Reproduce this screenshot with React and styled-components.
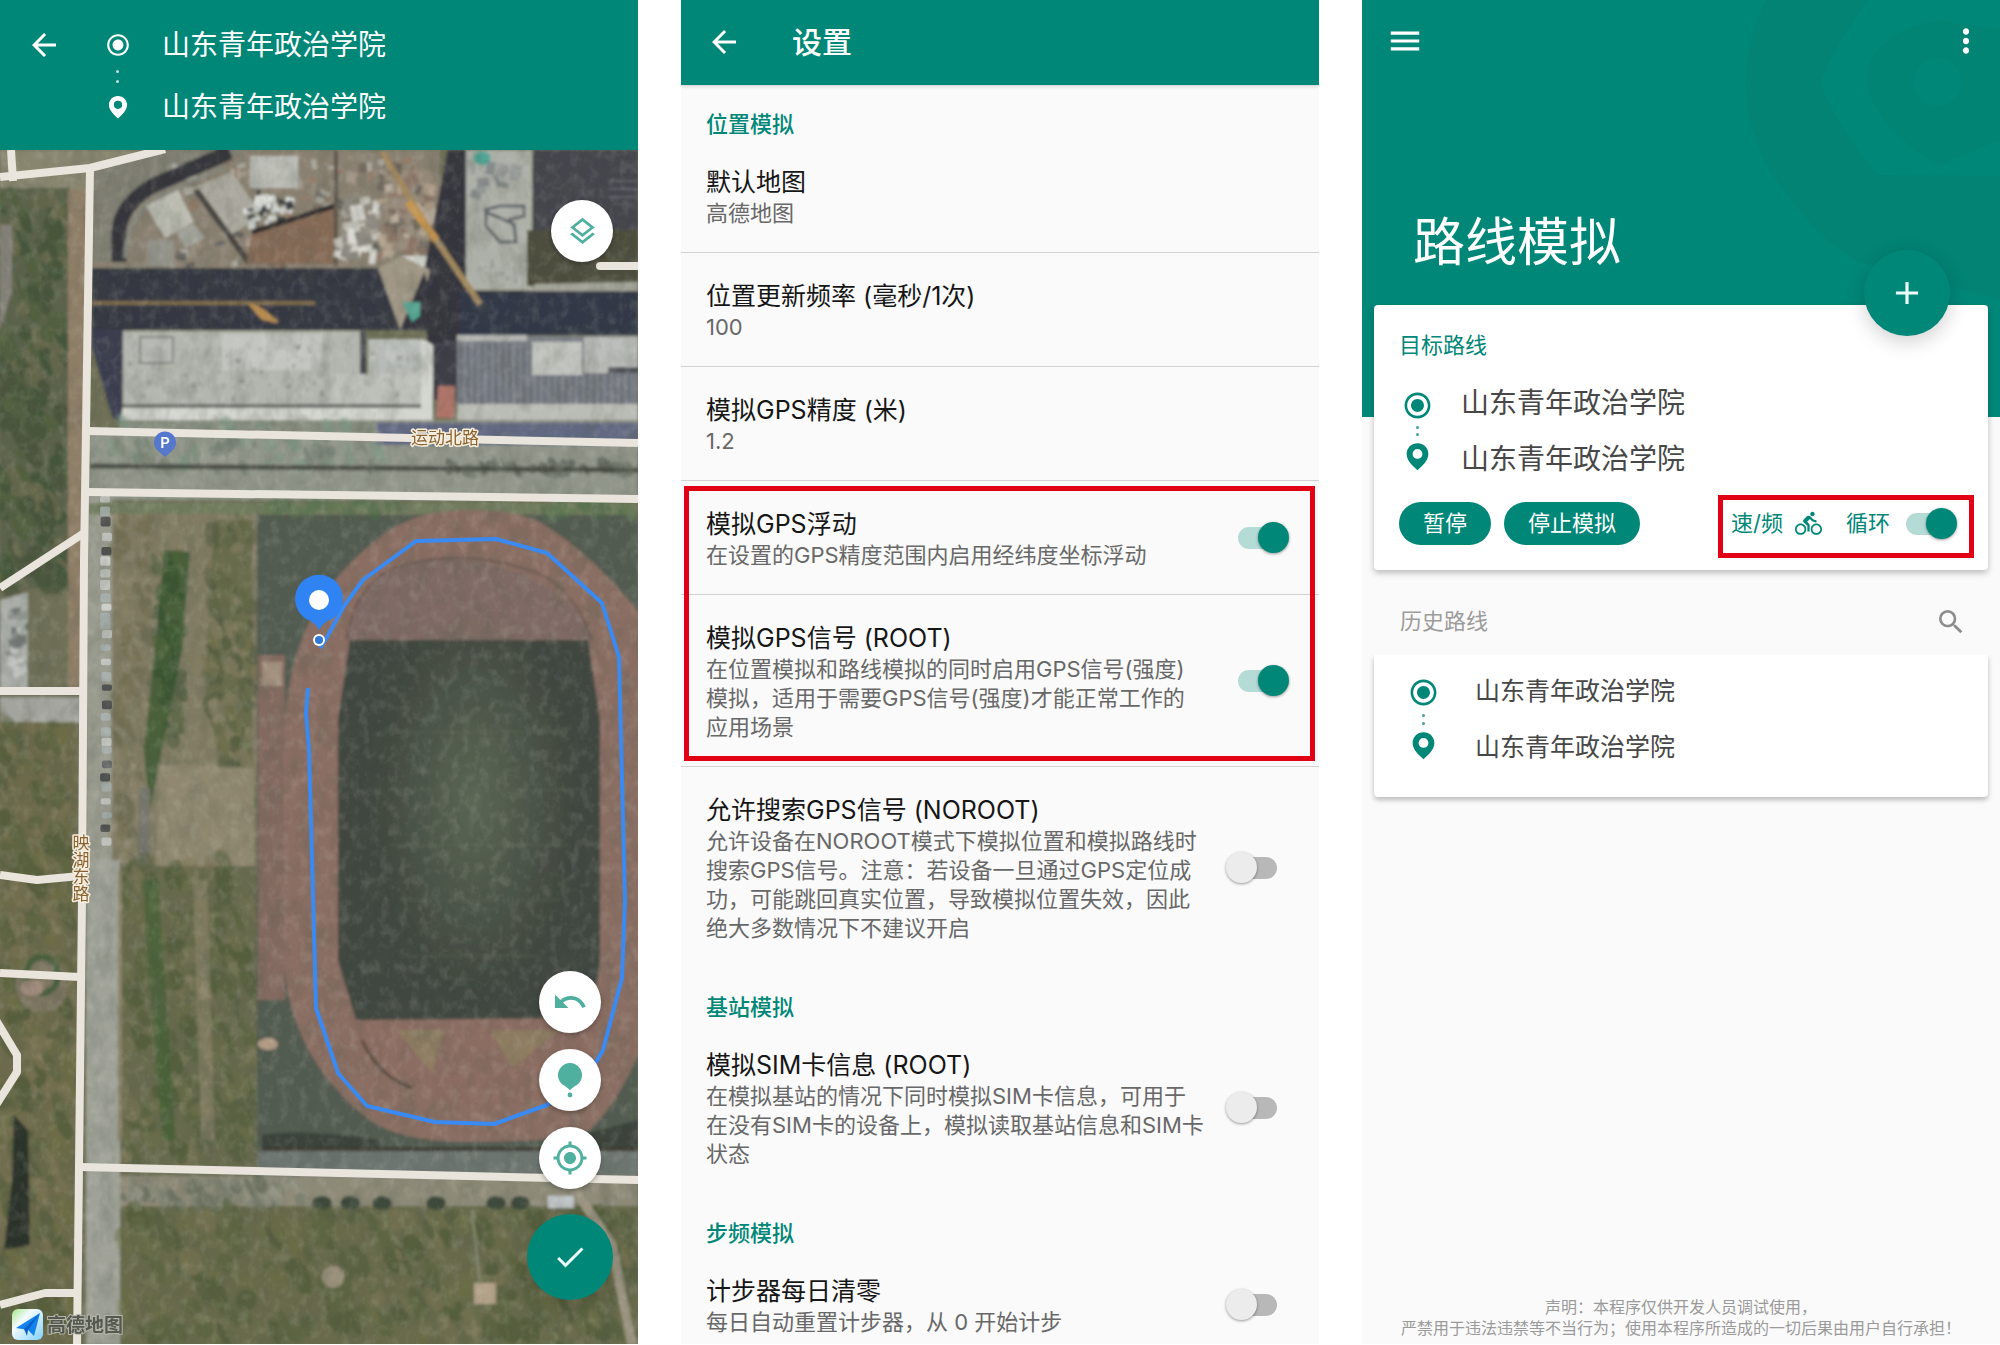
import React from "react";
import styled, { createGlobalStyle, css } from "styled-components";
import {
  MdArrowBack,
  MdRadioButtonChecked,
  MdMenu,
  MdMoreVert,
  MdSearch,
  MdAdd,
  MdCheck,
  MdDirectionsBike,
  MdMyLocation,
  MdOutlineLayers,
  MdUndo,
} from "react-icons/md";

const TEAL = "#008778";
const SOFT_TEAL = "#4fb0a0";
const SANS = 'Inter, "Noto Sans CJK SC", sans-serif';

const GlobalStyle = createGlobalStyle`
  *, *::before, *::after { box-sizing: border-box; }
  body { margin: 0; background: #fff; font-family: ${SANS}; }
  button { font: inherit; color: inherit; border: 0; padding: 0; background: none; cursor: pointer; }
  svg { display: block; flex: none; }
`;

const Page = styled.main`
  display: grid;
  grid-template-columns: repeat(3, minmax(0, 1fr));
  gap: 43px;
  height: 100vh;
  padding-bottom: 1px;
`;

const Screen = styled.section`
  display: flex;
  flex-direction: column;
  min-height: 0;
  overflow: hidden;
  background: #fafafa;
`;

const highlight = css`
  position: relative;
  &::after {
    content: "";
    position: absolute;
    inset: ${(p) => p.$inset};
    border: 5px solid #e10014;
    pointer-events: none;
  }
`;

const IconButton = styled.button`
  display: flex;
  color: ${(p) => p.$color || "#fff"};
`;

/* ---------- route (start / end) ---------- */

const RouteBox = styled.div`
  display: flex;
  align-items: center;
  gap: ${(p) => p.$gap}px;
`;

const Markers = styled.div`
  display: flex;
  flex-direction: column;
  align-items: center;
  width: 37px;
  color: ${(p) => p.$color};
`;

const Dots = styled.span`
  display: flex;
  flex-direction: column;
  justify-content: center;
  align-items: center;
  gap: ${(p) => p.$gap}px;
  height: ${(p) => p.$height}px;
  opacity: 0.75;
  &::before,
  &::after {
    content: "";
    width: 3px;
    height: 3px;
    border-radius: 50%;
    background: currentColor;
  }
`;

const Stops = styled.ul`
  display: flex;
  flex-direction: column;
  gap: ${(p) => p.$gap}px;
  margin: 0;
  padding: 0;
  list-style: none;
  font-size: ${(p) => p.$size}px;
  line-height: 40px;
  color: ${(p) => p.$color};
`;

function PinIcon({ size }) {
  return (
    <svg width={size} height={size} viewBox="0 0 24 24" fill="currentColor" aria-hidden="true">
      <path
        fillRule="evenodd"
        d="M12 1.8C7.3 1.8 3.6 5.4 3.6 10c0 5.300 4.700 9 8.400 12.600C15.700 19 20.400 15.300 20.400 10c0-4.600-3.700-8.200-8.400-8.200zM12 6.200a3.800 3.800 0 1 1 0 7.600a3.800 3.800 0 1 1 0-7.600z"
      />
    </svg>
  );
}

function Route({ iconSize, iconColor, dotsHeight, dotsGap, gap, size, color, rowGap }) {
  return (
    <RouteBox $gap={gap}>
      <Markers $color={iconColor}>
        <MdRadioButtonChecked size={iconSize} />
        <Dots $height={dotsHeight} $gap={dotsGap} />
        <PinIcon size={iconSize} />
      </Markers>
      <Stops $gap={rowGap} $size={size} $color={color}>
        <li>山东青年政治学院</li>
        <li>山东青年政治学院</li>
      </Stops>
    </RouteBox>
  );
}

/* ---------- switch ---------- */

const Switch = styled.input.attrs({ type: "checkbox", role: "switch" })`
  appearance: none;
  position: relative;
  flex: none;
  width: 63px;
  height: 31px;
  margin: 0;
  cursor: pointer;
  &::before {
    content: "";
    position: absolute;
    inset: 5px 12px 4px;
    border-radius: 11px;
    background: #b8b8b8;
  }
  &::after {
    content: "";
    position: absolute;
    top: 0;
    left: 0;
    width: 31px;
    height: 31px;
    border-radius: 50%;
    background: #ececec;
    box-shadow: 0 1px 3px rgba(0, 0, 0, 0.4);
  }
  &:checked::before {
    background: #b4dbd5;
  }
  &:checked::after {
    left: 32px;
    background: ${TEAL};
  }
`;

/* ---------- satellite map ---------- */

const RouteBar = styled.header`
  display: flex;
  align-items: flex-start;
  gap: 37px;
  padding: 25px 26px 23px;
  background: ${TEAL};
`;

const BackSlot = styled.div`
  display: flex;
  align-items: center;
  height: 40px;
`;

const MapArea = styled.div`
  position: relative;
  flex: 1;
  min-height: 0;
  overflow: hidden;
`;

const MapCanvas = styled.svg`
  position: absolute;
  inset: 0;
  width: 100%;
  height: 100%;
  font-family: ${SANS};
`;

const MapTools = styled.div`
  position: absolute;
  right: 25px;
  bottom: 44px;
  display: flex;
  flex-direction: column;
  align-items: center;
  gap: 16px;
`;

const RoundButton = styled.button`
  display: flex;
  align-items: center;
  justify-content: center;
  width: 62px;
  height: 62px;
  border-radius: 50%;
  background: #fff;
  color: ${SOFT_TEAL};
  box-shadow: 0 2px 5px rgba(0, 0, 0, 0.3);
`;

const LayersButton = styled(RoundButton)`
  position: absolute;
  top: 50px;
  right: 25px;
`;

const Fab = styled(RoundButton)`
  width: 86px;
  height: 86px;
  background: ${TEAL};
  color: #eafffb;
  box-shadow: 0 6px 20px rgba(0, 0, 0, 0.18);
`;

const ConfirmFab = styled(Fab)`
  margin-top: 9px;
`;

function random(seed) {
  let s = seed;
  return () => {
    s = (s * 16807) % 2147483647;
    return s / 2147483647;
  };
}

function Scatter({ x, y, w, h, count, colors, size, seed, boxy, opacity = 0.5 }) {
  const r = random(seed);
  const items = [];
  for (let i = 0; i < count; i++) {
    const cx = x + r() * w;
    const cy = y + r() * h;
    const a = size * (0.4 + r());
    const b = size * (0.4 + r());
    const fill = colors[Math.floor(r() * colors.length)];
    items.push(
      boxy ? (
        <rect key={i} x={cx - a} y={cy - b} width={a * 2} height={b * 2} fill={fill} transform={`rotate(${r() * 50 - 25} ${cx} ${cy})`} />
      ) : (
        <ellipse key={i} cx={cx} cy={cy} rx={a} ry={b * 1.7} fill={fill} transform={`rotate(-25 ${cx} ${cy})`} />
      )
    );
  }
  return <g opacity={opacity}>{items}</g>;
}

function Cars() {
  const r = random(77);
  const cars = [];
  const tones = ["#c9ccc8", "#d8dad6", "#3c3f40", "#a9b3b3", "#54585a"];
  for (let y = 496; y < 850; y += 8 + r() * 8) {
    cars.push(<rect key={y} x={100 + r() * 2} y={y} width={10} height={6 + r() * 4} rx={2} fill={tones[Math.floor(r() * 5)]} />);
  }
  return <g opacity="0.8">{cars}</g>;
}

function Imagery() {
  const greens = ["#35492c", "#2f4a2a", "#4b5c37", "#6f6a4c", "#3c4631"];
  const olive = ["#55603b", "#46542f", "#7d7657", "#6d6f45", "#4f5b3b"];
  return (
    <g>
      <rect y="150" width="638" height="1195" fill="#6f7057" />
      <g filter="url(#soften)">
        {/* west side of the avenue */}
        <path d="M0 150H165L88 172L90 260H0z" fill="#89866f" />
        <rect x="0" y="188" width="70" height="400" fill="#5c644b" />
        <Scatter x={0} y={195} w={66} h={400} count={150} colors={greens} size={8} seed={11} />
        <path d="M0 225H12V290L0 330z" fill="#85827a" />
        <rect x="68" y="190" width="20" height="500" fill="#907f67" />
        <path d="M0 600l28-8v98H0z" fill="#a9ada8" />
        <Scatter x={10} y={600} w={18} h={80} count={22} colors={["#e6e8e6", "#6d7470", "#3d4541"]} size={4} seed={5} boxy />
        <rect x="0" y="697" width="82" height="26" fill="#a3a49e" />
        <rect x="0" y="722" width="76" height="623" fill="#6c6b4b" />
        <Scatter x={0} y={726} w={70} h={604} count={210} colors={olive} size={8} seed={21} />
        <ellipse cx="42" cy="985" rx="26" ry="28" fill="#7b7560" />
        <ellipse cx="42" cy="975" rx="16" ry="18" fill="none" stroke="#47603a" strokeWidth="6" />
        <ellipse cx="32" cy="988" rx="12" ry="8" fill="#a08b7c" />
        <path d="M14 1115L28 1130L30 1245L4 1250L12 1180z" fill="#2c302b" />

        {/* construction site */}
        <path d="M92 170L165 150H440V270H92z" fill="#8a8172" />
        <path d="M92 170L165 150H250L120 212V262H92z" fill="#807f73" />
        <Scatter x={175} y={158} w={250} h={108} count={130} colors={["#b0a496", "#6b6158", "#9a7a66", "#bdbcb4", "#555555", "#9a8c7c"]} size={4} seed={31} boxy opacity={0.7} />
        <path d="M230 152L152 186Q120 206 119 232V262" fill="none" stroke="#34353b" strokeWidth="15" />
        <path d="M222 168L156 199Q127 216 125 258" fill="none" stroke="#85877e" strokeWidth="4" />
        <rect x="250" y="156" width="48" height="32" fill="#bcbdb6" />
        <path d="M195 187L232 172L262 215L226 238z" fill="#aaa89e" />
        <path d="M196 190L250 264" stroke="#46443f" strokeWidth="6" />
        <path d="M146 206L178 190L194 222L165 238z" fill="#bbbbb1" />
        <path d="M176 232L194 224L205 238L186 248z" fill="#a7a89f" />
        <rect x="148" y="240" width="26" height="26" fill="#93938a" />
        <Scatter x={248} y={195} w={42} h={30} count={30} colors={["#d6dad8", "#eef0ee", "#2f3538"]} size={4} seed={42} boxy opacity={0.9} />
        <path d="M252 232L334 206V264H246z" fill="#856a57" />
        <path d="M252 232L334 206" stroke="#2f2c2a" strokeWidth="5" />
        <path d="M336 150V266" stroke="#5b544c" strokeWidth="4" />
        <Scatter x={340} y={200} w={38} h={60} count={30} colors={["#c9c6be", "#e4e3de", "#8e8a82"]} size={6} seed={51} boxy opacity={0.9} />
        <path d="M384 170H430V250H384z" fill="#978b7c" />
        <Scatter x={382} y={165} w={50} h={90} count={36} colors={["#c2b6a4", "#6b6259", "#b7a58e", "#8b7163"]} size={5} seed={52} boxy opacity={0.8} />
        <rect x="402" y="256" width="32" height="20" fill="#d3d6cf" />

        {/* shaded roofs and the cranes above them */}
        <path d="M92 268H378L404 330H92z" fill="#363743" />
        <path d="M424 275L455 150H465V400H430z" fill="#34353d" />
        <path d="M448 150H466V340H436L424 270z" fill="#35363e" />
        <path d="M378 268L402 256L430 270L424 300L400 330z" fill="#a09786" />
        <path d="M400 330L424 272L445 330z" fill="#34353d" />
        <rect x="466" y="150" width="66" height="140" fill="#adb0a8" />
        <Scatter x={472} y={166} w={48} h={30} count={12} colors={["#85898a", "#6d7478"]} size={5} seed={61} boxy opacity={0.6} />
        <path d="M484 210L500 206H524V216L508 220M486 212V226L500 242H516L514 224z" fill="none" stroke="#5d6468" strokeWidth="3" />
        <Scatter x={480} y={262} w={36} h={24} count={14} colors={["#85898a"]} size={2} seed={63} boxy />
        <ellipse cx="482" cy="158" rx="9" ry="7" fill="#4ba091" />
        <rect x="533" y="150" width="105" height="80" fill="#44454d" />
        <path d="M608 181h30M608 189h30M608 197h30" stroke="#5f6068" strokeWidth="2" />
        <rect x="527" y="230" width="111" height="56" fill="#4e4d3d" />
        <path d="M535 284L638 282V292H530z" fill="#a3a499" />
        <rect x="460" y="291" width="178" height="44" fill="#303747" />
        <path d="M92 303H315" stroke="#7d6a4c" strokeWidth="4" />
        <path d="M250 304L262 310L277 322L262 318z" fill="#b88d50" stroke="#b88d50" strokeWidth="3" />
        <path d="M382 152L428 228L480 304" fill="none" stroke="#a3895e" strokeWidth="6" />
        <path d="M408 202L436 240" stroke="#c49450" strokeWidth="8" />
        <path d="M402 302H420V316L412 322z" fill="#54a390" />

        {/* long white buildings */}
        <path d="M92 330H123L122 424L112 416L92 346z" fill="#3b3e50" />
        <rect x="123" y="331" width="240" height="80" fill="#b3b5af" />
        <rect x="140" y="337" width="33" height="26" fill="#b7b9b5" stroke="#7f827d" strokeWidth="2" />
        <rect x="222" y="334" width="100" height="36" fill="#c3c5c0" />
        <path d="M363 331V374" stroke="#474a4d" strokeWidth="6" />
        <path d="M368 339H420L430 345V374H368z" fill="#bcc0bc" />
        <path d="M330 374H424V408H330z" fill="#bcc0b9" />
        <Scatter x={130} y={345} w={285} h={55} count={60} colors={["#8b8f88", "#9da19a", "#777c77"]} size={2} seed={71} boxy />
        <rect x="123" y="404" width="298" height="4" fill="#6d706a" />
        <path d="M123 408H421V338L433 345V420H120z" fill="#d3d5cf" />
        <path d="M434 342H458V400H436z" fill="#3c3e46" />
        <rect x="457" y="336" width="181" height="70" fill="#7b8087" />
        <g stroke="#666b73" strokeWidth="2">
          {Array.from({ length: 25 }, (_, i) => (
            <path key={i} d={`M${461 + i * 7} 343V404`} />
          ))}
        </g>
        <rect x="457" y="335" width="70" height="6" fill="#b2b5b1" />
        <rect x="532" y="342" width="50" height="33" fill="#c1c4be" />
        <rect x="584" y="337" width="54" height="36" fill="#bbbeba" />
        <path d="M608 370H638" stroke="#4d5156" strokeWidth="6" />
        <rect x="457" y="404" width="181" height="16" fill="#babdb6" />
        <path d="M438 386H455V418H436z" fill="#b0756b" />
        <rect x="120" y="420" width="518" height="12" fill="#878e80" />
        <path d="M88 432H638V500H88z" fill="#91968a" />
        <rect x="376" y="423" width="262" height="22" fill="#626983" />
        <Scatter x={110} y={420} w={270} h={50} count={75} colors={["#74826f", "#9aa091", "#66766a", "#7d9a86"]} size={5} seed={81} />
        <path d="M90 466L638 470" stroke="#4b5047" strokeWidth="5" />
        <Scatter x={450} y={464} w={185} h={8} count={40} colors={["#3e453d", "#5a6255"]} size={4} seed={83} />

        {/* grove between the avenue and the stadium */}
        <rect x="88" y="504" width="170" height="360" fill="#817b63" />
        <rect x="86" y="490" width="26" height="855" fill="#9a9b8f" />
        <path d="M214 520H252V818L232 810L205 700z" fill="#6a6d4d" />
        <Scatter x={116} y={515} w={34} h={330} count={65} colors={["#6c6a4d", "#8f876d", "#64674d"]} size={6} seed={91} />
        <path d="M164 550L190 552L182 650L150 810L144 750L156 640z" fill="#48603a" />
        <Scatter x={156} y={550} w={26} h={190} count={60} colors={["#3a582f", "#4c6039", "#304a2b"]} size={6} seed={92} />
        <Scatter x={210} y={515} w={42} h={290} count={100} colors={["#5a6242", "#74734f", "#4a553a", "#8c846a"]} size={6} seed={93} />
        <path d="M158 764L254 768V930H155z" fill="#90886f" />
        <rect x="138" y="788" width="12" height="80" fill="#77766c" />
        <rect x="112" y="866" width="148" height="300" fill="#676a4d" />
        <Scatter x={114} y={860} w={142} h={298} count={200} colors={olive} size={7} seed={94} />
        <path d="M142 880L158 880L176 1140L162 1140z" fill="#3f6034" opacity="0.6" />
        <path d="M200 880L208 1140" stroke="#958a74" strokeWidth="14" opacity="0.55" />
        <rect x="86" y="860" width="34" height="485" fill="#a0a298" />
        <path d="M120 870V1140" stroke="#8a8368" strokeWidth="4" />

        {/* stadium */}
        <rect x="257" y="515" width="381" height="640" fill="#525c51" />
        <rect x="88" y="503" width="550" height="11" fill="#727d5e" />
        <Scatter x={268} y={503} w={130} h={10} count={40} colors={["#4a6f47", "#5c7850"]} size={4} seed={95} />
        <Scatter x={545} y={503} w={90} h={12} count={30} colors={["#4a6f47", "#5c7850"]} size={4} seed={98} />
        <rect x="258" y="655" width="27" height="345" fill="#836a60" />
        <rect x="262" y="662" width="20" height="24" fill="#a18f7d" />
        <path d="M284 740Q286 600 390 530Q420 510 470 510Q510 510 536 520Q600 556 660 640V980Q640 1080 590 1130Q570 1142 470 1142Q400 1142 370 1120Q290 1060 284 960z" fill="#8a6e64" />
        <path d="M346 640Q356 580 400 566Q470 546 545 586Q585 610 592 640z" fill="#7f6a65" />
        <path d="M346 640Q356 580 400 566Q470 546 545 576Q580 600 592 640" fill="none" stroke="#6c5953" strokeWidth="2" />
        <path d="M346 1018H600Q585 1105 480 1105Q375 1095 346 1018z" fill="#8c6d62" />
        <path d="M396 1030H445L432 1072z" fill="#8f7d62" />
        <path d="M490 1030H560L512 1068z" fill="#8f7d62" />
        <path d="M362 1040Q378 1076 412 1088" fill="none" stroke="#54483f" strokeWidth="3" />
        <path d="M350 640H588L600 720V960L592 1018L356 1020L338 960V720z" fill="#40473f" />
        <ellipse cx="475" cy="800" rx="100" ry="190" fill="url(#turf)" />
        <g stroke="#626c5b" strokeWidth="2" opacity="0.35">
          <path d="M400 732H560M390 790H570M390 845H570M400 900H560M400 956H540" />
        </g>
        <path d="M262 1135Q300 1128 380 1140V1148H262zM560 1140L638 1120V1148H560z" fill="#3b433b" />
        <path d="M262 1149H638" stroke="#3e3a31" strokeWidth="4" />
        <rect x="257" y="1151" width="381" height="26" fill="#6d7470" />
        <ellipse cx="268" cy="1044" rx="10" ry="6" fill="#b99f88" />

        {/* lawn south of the stadium */}
        <rect x="120" y="1176" width="518" height="34" fill="#8e8a78" />
        <rect x="120" y="1206" width="518" height="139" fill="#676b4b" />
        <Scatter x={124} y={1182} w={180} h={24} count={70} colors={["#54604f", "#727b6b", "#8f9486"]} size={5} seed={96} />
        {[322, 350, 382, 436, 496, 520].map((x) => (
          <ellipse key={x} cx={x} cy="1203" rx="10" ry="7" fill="#3e4a3a" />
        ))}
        <Scatter x={124} y={1215} w={508} h={126} count={230} colors={olive} size={8} seed={97} />
        <path d="M575 1190L612 1245L632 1345" fill="none" stroke="#9f9784" strokeWidth="9" />
        <rect x="474" y="1283" width="22" height="21" fill="#b3a289" />
        <circle cx="333" cy="1277" r="11" fill="#9d937d" />
        <path d="M472 1210L480 1284" stroke="#8a907a" strokeWidth="2" />
        <rect x="548" y="1196" width="26" height="12" fill="#c4c8cc" />
      </g>
      <Cars />
      <rect y="150" width="638" height="1195" filter="url(#shade)" opacity="0.22" />
      <rect y="150" width="638" height="1195" filter="url(#glint)" opacity="0.12" />
    </g>
  );
}

function SatelliteMap() {
  const halo = { paintOrder: "stroke", stroke: "#f6efe0", strokeWidth: 3, strokeLinejoin: "round" };
  return (
    <MapCanvas viewBox="0 150 638 1194" preserveAspectRatio="xMidYMin slice" role="img" aria-label="卫星地图">
      <defs>
        <filter id="soften" x="0" y="0" width="100%" height="100%">
          <feGaussianBlur stdDeviation="1.4" />
        </filter>
        <filter id="shade" x="0" y="0" width="100%" height="100%">
          <feTurbulence type="fractalNoise" baseFrequency="0.06 0.04" numOctaves="3" seed="4" />
          <feColorMatrix values="0 0 0 0 0.08  0 0 0 0 0.1  0 0 0 0 0.07  2.4 0 0 0 -1" />
        </filter>
        <filter id="glint" x="0" y="0" width="100%" height="100%">
          <feTurbulence type="fractalNoise" baseFrequency="0.1 0.08" numOctaves="3" seed="9" />
          <feColorMatrix values="0 0 0 0 0.9  0 0 0 0 0.88  0 0 0 0 0.8  0 2.4 0 0 -1.1" />
        </filter>
        <radialGradient id="turf">
          <stop offset="0" stopColor="#5c6755" />
          <stop offset="1" stopColor="#5c6755" stopOpacity="0" />
        </radialGradient>
        <linearGradient id="logo" x1="0" y1="0" x2="1" y2="1">
          <stop offset="0" stopColor="#a6e58a" />
          <stop offset="0.35" stopColor="#f4fbff" />
          <stop offset="1" stopColor="#7fd0fb" />
        </linearGradient>
      </defs>

      <Imagery />

      <g fill="none" stroke="#e9e5dc" strokeWidth="8" strokeLinejoin="round">
        <path d="M0 177L90 168L165 149" />
        <path d="M11 150L13 181" />
        <path d="M90 168L84 560L82 900L77 1345" />
        <path d="M88 431L638 443" />
        <path d="M88 492L638 499" />
        <path d="M0 588L84 533" />
        <path d="M0 691H84" />
        <path d="M0 875L37 880L80 876" />
        <path d="M0 973L80 977" />
        <path d="M-4 1020L17 1055V1072L-4 1105" />
        <path d="M80 1167L638 1180" />
        <path d="M0 1305L45 1293H78" />
        <path d="M600 266H650" strokeLinecap="round" />
      </g>

      <path d="M165 457L157 450A11 11 0 1 1 173 450z" fill="#5577cc" />
      <text x="165" y="448" fontSize="15" fontWeight="600" fill="#fff" textAnchor="middle">P</text>
      <g fontSize="17" fill="#8a6230">
        <text x="411" y="444" {...halo}>运动北路</text>
        <text textAnchor="middle" {...halo}>
          <tspan x="81" y="849">映</tspan>
          <tspan x="81" y="866">湖</tspan>
          <tspan x="81" y="883">东</tspan>
          <tspan x="81" y="900">路</tspan>
        </text>
      </g>

      <path
        d="M320 648L327 637L344 606L363 580L416 541L496 539L547 553L602 603L619 657L625 900L622 978L603 1050L596 1062L547 1105L494 1124L435 1122L367 1106L338 1073L316 1008L313 895L309 750L306 713L308 688"
        fill="none"
        stroke="#3a8af3"
        strokeWidth="4"
        strokeLinejoin="round"
      />
      <path d="M319 630Q315 622 306 619A24 24 0 1 1 332 619Q323 622 319 630z" fill="#2f83f3" />
      <circle cx="319" cy="600" r="10" fill="#fff" />
      <circle cx="319" cy="640" r="6" fill="#fff" />
      <circle cx="319" cy="640" r="4" fill="#2f78d8" />

      <rect x="12" y="1309" width="31" height="31" rx="6" fill="url(#logo)" />
      <path d="M40 1313L34 1336L28 1330L16 1328z" fill="#1283ee" />
      <path d="M40 1313L28 1330L27 1336L24 1329z" fill="#0b5fc4" />
      <text x="47" y="1332" fontSize="19" fontWeight="700" fill="#55584f" paintOrder="stroke" stroke="#b4b5a9" strokeWidth="2">
        高德地图
      </text>
    </MapCanvas>
  );
}

function MapScreen() {
  return (
    <Screen>
      <RouteBar>
        <BackSlot>
          <IconButton aria-label="返回"><MdArrowBack size={36} /></IconButton>
        </BackSlot>
        <Route iconSize={26} iconColor="#fff" dotsHeight={36} dotsGap={7} gap={26} size={28} color="#fff" rowGap={22} />
      </RouteBar>
      <MapArea>
        <SatelliteMap />
        <LayersButton aria-label="图层"><MdOutlineLayers size={33} /></LayersButton>
        <MapTools>
          <RoundButton aria-label="撤销"><MdUndo size={36} /></RoundButton>
          <RoundButton aria-label="标记">
            <svg width="36" height="36" viewBox="0 0 36 36" fill="currentColor">
              <path d="M18 28L13 24A12 12 0 1 1 23 24z" />
              <circle cx="18" cy="33" r="2.4" />
            </svg>
          </RoundButton>
          <RoundButton aria-label="定位"><MdMyLocation size={36} /></RoundButton>
          <ConfirmFab aria-label="确定"><MdCheck size={36} /></ConfirmFab>
        </MapTools>
      </MapArea>
    </Screen>
  );
}

/* ---------- settings ---------- */

const TitleBar = styled.header`
  display: flex;
  flex: none;
  align-items: center;
  gap: 50px;
  height: 85px;
  padding: 0 25px 2px;
  background: ${TEAL};
  color: #fff;
  box-shadow: 0 1px 4px rgba(0, 0, 0, 0.2);
`;

const BarTitle = styled.h1`
  margin: 0;
  font-size: 30px;
  line-height: 40px;
  font-weight: 500;
`;

const SectionTitle = styled.h2`
  flex: none;
  margin: 0;
  padding: 25px 25px 0;
  font-size: 22px;
  line-height: 29px;
  font-weight: 500;
  color: ${TEAL};
`;

const itemLayout = css`
  display: flex;
  flex: none;
  align-items: center;
  justify-content: space-between;
  width: 100%;
  padding: 27px 30px 24px 25px;
  border-bottom: 1px solid ${(p) => (p.$last ? "transparent" : "#d2d2d2")};
  text-align: left;
  cursor: pointer;
  ${Switch} {
    margin-bottom: 3px;
  }
`;

const ItemButton = styled.button`
  &&& {
    ${itemLayout}
  }
`;

const ItemLabel = styled.label`
  ${itemLayout}
`;

const ItemText = styled.span`
  display: flex;
  flex-direction: column;
`;

const ItemTitle = styled.span`
  font-size: 25px;
  line-height: 33px;
  color: #161616;
`;

const ItemDetail = styled.span`
  font-size: 22px;
  line-height: 29px;
  color: #686868;
  white-space: pre;
`;

const ItemGroup = styled.div`
  flex: none;
  ${highlight}
`;

function ValueItem({ title, value }) {
  return (
    <ItemButton>
      <ItemText>
        <ItemTitle>{title}</ItemTitle>
        <ItemDetail>{value}</ItemDetail>
      </ItemText>
    </ItemButton>
  );
}

function SwitchItem({ title, lines, on, last }) {
  return (
    <ItemLabel $last={last}>
      <ItemText>
        <ItemTitle>{title}</ItemTitle>
        <ItemDetail>{lines.join("\n")}</ItemDetail>
      </ItemText>
      <Switch defaultChecked={on} />
    </ItemLabel>
  );
}

function SettingsScreen() {
  return (
    <Screen>
      <TitleBar>
        <IconButton aria-label="返回"><MdArrowBack size={36} /></IconButton>
        <BarTitle>设置</BarTitle>
      </TitleBar>
      <SectionTitle>位置模拟</SectionTitle>
      <ValueItem title="默认地图" value="高德地图" />
      <ValueItem title="位置更新频率 (毫秒/1次)" value="100" />
      <ValueItem title="模拟GPS精度 (米)" value="1.2" />
      <ItemGroup $inset="5px 4px 6px 3px">
        <SwitchItem title="模拟GPS浮动" lines={["在设置的GPS精度范围内启用经纬度坐标浮动"]} on />
        <SwitchItem
          title="模拟GPS信号 (ROOT)"
          lines={["在位置模拟和路线模拟的同时启用GPS信号(强度)", "模拟，适用于需要GPS信号(强度)才能正常工作的", "应用场景"]}
          on
        />
      </ItemGroup>
      <SwitchItem
        title="允许搜索GPS信号 (NOROOT)"
        lines={[
          "允许设备在NOROOT模式下模拟位置和模拟路线时",
          "搜索GPS信号。注意：若设备一旦通过GPS定位成",
          "功，可能跳回真实位置，导致模拟位置失效，因此",
          "绝大多数情况下不建议开启",
        ]}
        last
      />
      <SectionTitle>基站模拟</SectionTitle>
      <SwitchItem
        title="模拟SIM卡信息 (ROOT)"
        lines={["在模拟基站的情况下同时模拟SIM卡信息，可用于", "在没有SIM卡的设备上，模拟读取基站信息和SIM卡", "状态"]}
        last
      />
      <SectionTitle>步频模拟</SectionTitle>
      <SwitchItem title="计步器每日清零" lines={["每日自动重置计步器，从 0 开始计步"]} last />
    </Screen>
  );
}

/* ---------- route simulation ---------- */

const Hero = styled.header`
  position: relative;
  flex: none;
  height: 417px;
  padding: 22px 15px 0 24px;
  background: ${TEAL};
  color: #fff;
`;

const HeroArt = styled.svg`
  position: absolute;
  top: 0;
  right: 0;
`;

const HeroTools = styled.div`
  position: relative;
  display: flex;
  justify-content: space-between;
`;

const HeroTitle = styled.h1`
  position: relative;
  margin: 147px 0 0 27px;
  font-size: 52px;
  line-height: 72px;
  font-weight: 400;
`;

const Card = styled.section`
  position: relative;
  flex: none;
  margin: 0 12px;
  background: #fff;
  box-shadow: 0 3px 6px rgba(0, 0, 0, 0.25);
`;

const TargetCard = styled(Card)`
  display: flex;
  flex-direction: column;
  gap: 23px;
  margin-top: -112px;
  padding: 26px 31px 25px 25px;
  border-radius: 4px;
`;

const CardTitle = styled.h2`
  margin: 0;
  font-size: 22px;
  line-height: 29px;
  font-weight: 400;
  color: ${(p) => p.$color};
`;

const AddFab = styled(Fab)`
  position: absolute;
  top: -55px;
  right: 38px;
`;

const Actions = styled.div`
  display: flex;
  align-items: center;
  gap: 13px;
  font-size: 22px;
  line-height: 29px;
`;

const PillButton = styled.button`
  &&& {
    height: 43px;
    padding: 0 24px;
    border-radius: 22px;
    background: ${TEAL};
    color: #fff;
  }
`;

const Options = styled.div`
  display: flex;
  align-items: center;
  gap: 24px;
  height: 43px;
  margin-left: auto;
  color: ${TEAL};
  ${highlight}
`;

const PaceButton = styled.button`
  display: flex;
  align-items: center;
  gap: 12px;
`;

const LoopLabel = styled.label`
  display: flex;
  align-items: center;
  gap: 4px;
`;

const HistoryHead = styled.div`
  display: flex;
  flex: none;
  align-items: center;
  justify-content: space-between;
  height: 85px;
  padding: 18px 33px 0 38px;
`;

const HistoryCard = styled(Card)`
  padding: 16px 31px 30px;
  box-shadow: 0 3px 5px rgba(0, 0, 0, 0.25);
  clip-path: inset(0 -12px -12px);
  border-radius: 0 0 4px 4px;
`;

const Notice = styled.footer`
  margin-top: auto;
  padding-bottom: 5px;
  font-size: 16px;
  line-height: 21px;
  text-align: center;
  color: #9a9a9a;
`;

function SimulationScreen() {
  return (
    <Screen>
      <Hero>
        <HeroArt width="262" height="300" viewBox="0 0 262 300" aria-hidden="true">
          <path
            fill="#04806f"
            fillOpacity="0.5"
            d="M28 0Q-14 90 32 170Q70 230 120 262L262 300V176L140 175Q100 130 82 82Q100 40 130 0z"
          />
          <path fill="#04806f" fillOpacity="0.4" fillRule="evenodd" d="M200 20Q130 34 128 82Q140 130 200 165L262 140V30zM200 58a24 24 0 1 1-1 0z" />
        </HeroArt>
        <HeroTools>
          <IconButton aria-label="菜单"><MdMenu size={38} /></IconButton>
          <IconButton aria-label="更多"><MdMoreVert size={38} /></IconButton>
        </HeroTools>
        <HeroTitle>路线模拟</HeroTitle>
      </Hero>
      <TargetCard>
        <CardTitle $color={TEAL}>目标路线</CardTitle>
        <Route iconSize={31} iconColor={TEAL} dotsHeight={20} dotsGap={4} gap={25} size={28} color="#474747" rowGap={16} />
        <Actions>
          <PillButton>暂停</PillButton>
          <PillButton>停止模拟</PillButton>
          <Options $inset="-7px -17px -13px -13px">
            <PaceButton>
              速/频
              <MdDirectionsBike size={27} />
            </PaceButton>
            <LoopLabel>
              循环
              <Switch defaultChecked />
            </LoopLabel>
          </Options>
        </Actions>
        <AddFab aria-label="添加"><MdAdd size={38} /></AddFab>
      </TargetCard>
      <HistoryHead>
        <CardTitle $color="#9c9c9c">历史路线</CardTitle>
        <IconButton aria-label="搜索" $color="#8c8c8c"><MdSearch size={32} /></IconButton>
      </HistoryHead>
      <HistoryCard>
        <Route iconSize={31} iconColor={TEAL} dotsHeight={22} dotsGap={5} gap={33} size={25} color="#474747" rowGap={16} />
      </HistoryCard>
      <Notice>
        声明：本程序仅供开发人员调试使用，
        <br />
        严禁用于违法违禁等不当行为；使用本程序所造成的一切后果由用户自行承担！
      </Notice>
    </Screen>
  );
}

export default function App() {
  return (
    <>
      <GlobalStyle />
      <Page>
        <MapScreen />
        <SettingsScreen />
        <SimulationScreen />
      </Page>
    </>
  );
}
